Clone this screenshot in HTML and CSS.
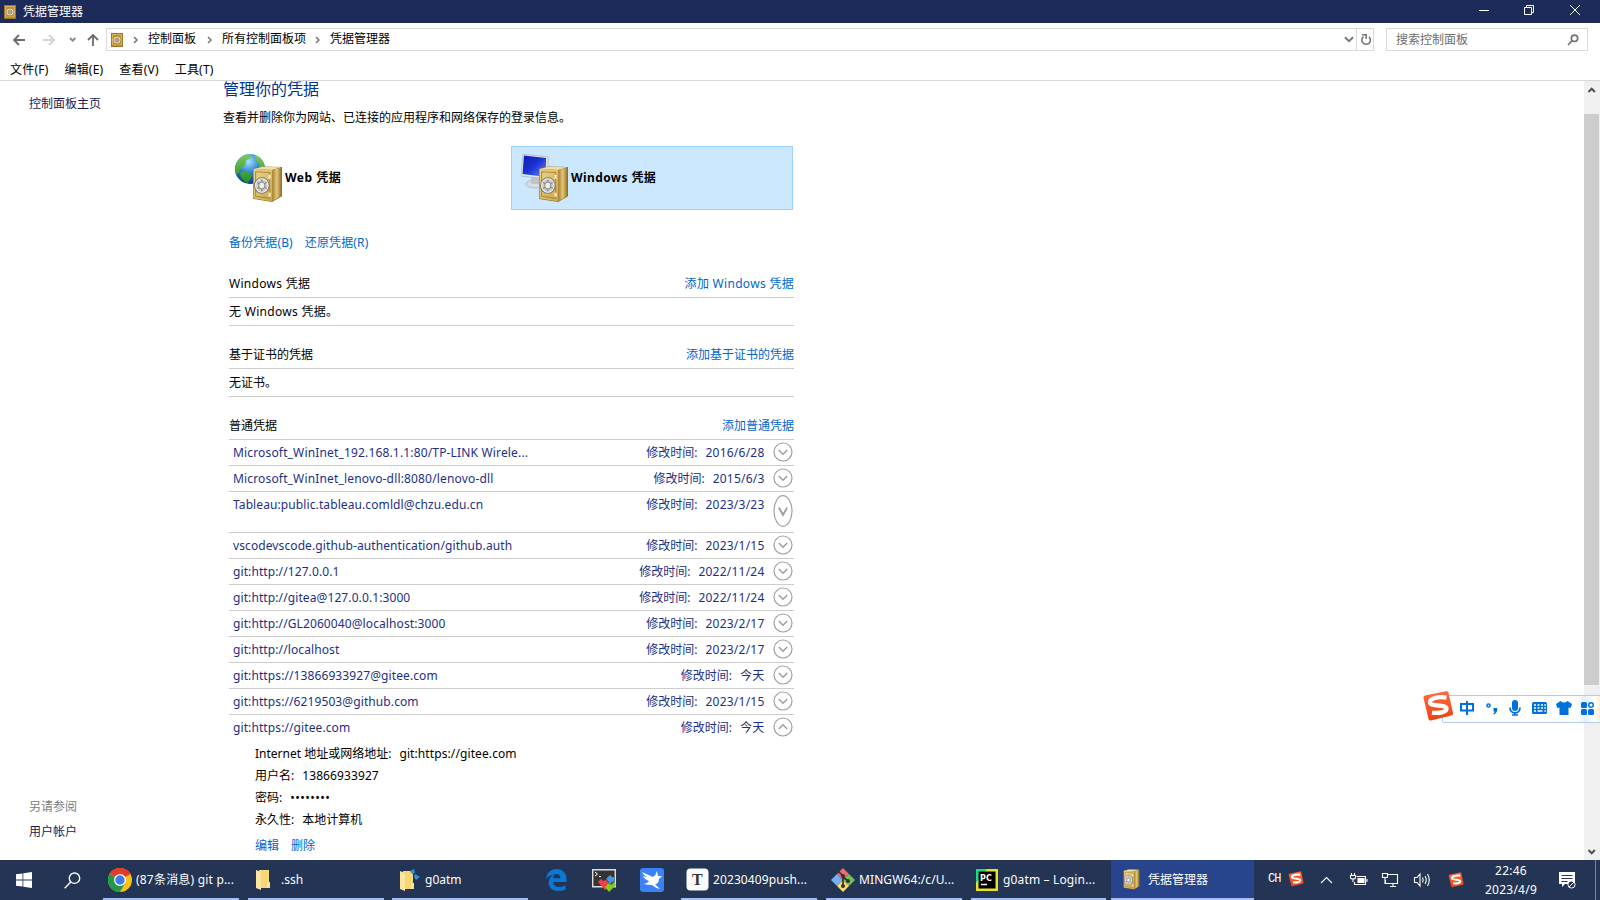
FILE: index.html
```html
<!DOCTYPE html>
<html lang="zh-CN">
<head>
<meta charset="utf-8">
<title>凭据管理器</title>
<link rel="stylesheet" href="styles.css">
</head>
<body>
<svg class="defs" width="0" height="0" aria-hidden="true">
  <defs>
    <linearGradient id="gold" x1="0" y1="0" x2="1" y2="1"><stop offset="0" stop-color="#ecd68f"/><stop offset="1" stop-color="#c9a54c"/></linearGradient>
    <linearGradient id="side" x1="0" y1="0" x2="1" y2="0"><stop offset="0" stop-color="#a8822f"/><stop offset=".5" stop-color="#e2c777"/><stop offset="1" stop-color="#94712a"/></linearGradient>
    <radialGradient id="sea" cx=".45" cy=".25" r=".8"><stop offset="0" stop-color="#a6e2fa"/><stop offset=".45" stop-color="#2f86d4"/><stop offset="1" stop-color="#0d2f74"/></radialGradient>
    <linearGradient id="land" x1="0" y1="0" x2="0" y2="1"><stop offset="0" stop-color="#7cc95a"/><stop offset="1" stop-color="#1f8f22"/></linearGradient>
    <linearGradient id="screen" x1="0" y1="0" x2="1" y2="1"><stop offset="0" stop-color="#0a1bb0"/><stop offset=".5" stop-color="#1c34d4"/><stop offset="1" stop-color="#6f8dfa"/></linearGradient>
    <linearGradient id="sg" x1="0" y1="0" x2="0" y2="1"><stop offset="0" stop-color="#ff6a3c"/><stop offset="1" stop-color="#ec4410"/></linearGradient>
    <symbol id="vault" viewBox="0 0 30 36" preserveAspectRatio="none">
      <path d="M1 3 10 .5 29 1v28.500L19.500 35 1 32z" fill="#8d6b22"/>
      <path d="M1.500 3 10 .8 28.500 1.200 19.500 4z" fill="#f2dfa4"/>
      <path d="M19.500 4 28.500 1.500v27.500l-9 5.500z" fill="url(#side)"/>
      <path d="M1.500 3l18 1v30.500L1.500 31.500z" fill="url(#gold)"/>
      <path d="M3.500 5.500 17 6.300v25.200L3.500 29.500z" fill="none" stroke="#ad8b3e"/>
      <path d="M17 8.500v4M17 26v4" stroke="#f9efc9" stroke-width="2"/>
      <ellipse cx="9.500" cy="19" rx="7" ry="7.600" fill="#c9c9c6" stroke="#77766f"/>
      <path d="M9.500 12.500v13M4 15.500l11 7M15 15.500l-11 7" stroke="#85847d" stroke-width="1"/>
      <ellipse cx="9.500" cy="19" rx="6" ry="6.600" fill="none" stroke="#f1f1ee" stroke-width="1"/>
      <ellipse cx="9.500" cy="19" rx="3" ry="3.400" fill="#ececea" stroke="#77766f" stroke-width=".8"/>
    </symbol>
    <symbol id="safe" viewBox="0 0 12 14">
      <path d="M0 0h12v14H0z" fill="#9b762b"/><path d="M1 1h10v11.500H1z" fill="#d8b357"/><path d="M2 2h8v9.500H2z" fill="#b88f3b"/>
      <circle cx="6" cy="7" r="3.300" fill="#eee6cf"/><circle cx="6" cy="7" r="2" fill="#d7cfb8" stroke="#8c8065"/><circle cx="6" cy="7" r=".7" fill="#5f5640"/>
    </symbol>
    <symbol id="down" viewBox="0 0 20 20"><circle cx="10" cy="10" r="9" fill="#fff" stroke="#a0a0a0" stroke-width="1.200" vector-effect="non-scaling-stroke"/><path d="M5.800 8 10 12.200 14.200 8" fill="none" stroke="#a0a0a0" stroke-width="1.600"/></symbol>
    <symbol id="sogou" viewBox="0 0 32 32"><path d="M3 5.500 24 1.200q2-.4 2.500 1.500L31 23q.4 2-1.600 2.500L9 30.500q-2 .4-2.500-1.600L1.500 8Q1 6 3 5.500z" fill="url(#sg)"/><path d="M24.500 7.600C17 6.200 7.500 8 8 12.500c.5 4.500 16.500 1.500 16.500 6 0 4-8 5-14.500 4" fill="none" stroke="#fff" stroke-width="4.300"/></symbol>
    <symbol id="folder" viewBox="0 0 14 20"><path d="M3 1h10v17H3z" fill="#d9ac47"/><path d="M3 0h10v12l-1 6H5z" fill="#f7d777"/><path d="M0 0 5 2v18l-5-2z" fill="#fbe6a0"/><path d="M11 12h3v6h-3z" fill="#fbe397"/></symbol>
  </defs>
</svg>

<header class="titlebar">
  <svg class="app-icon" width="12" height="14"><use href="#safe"/></svg>
  <span class="title">凭据管理器</span>
  <svg class="winctl" width="104" height="14" viewBox="0 0 104 14" fill="none" stroke="#fff"><path d="M0 7.500h10M45.500 4.500h7v7h-7zM47.500 4V2.500h7v7H53M91 2l10 10M101 2 91 12" /></svg>
</header>

<nav class="navbar">
  <svg class="arrows" width="90" height="16" viewBox="0 0 90 16" fill="none" stroke-width="1.800"><path d="M13 8H2M7 3 2 8l5 5" stroke="#6b6b6b"/><path d="M31 8h11M37 3l5 5-5 5" stroke="#d4d4d4"/><path d="m58 6 2.700 2.700L63.400 6" stroke="#888"/><path d="M81 14V3M76 8l5-5 5 5" stroke="#6b6b6b"/></svg>
  <div class="address">
    <svg class="addr-icon" width="12" height="14"><use href="#safe"/></svg>
    <svg class="crumb first" width="6" height="8"><path d="m1 1 3 3-3 3" fill="none" stroke="#777" stroke-width="1.500"/></svg>
    <span>控制面板</span>
    <svg class="crumb" width="6" height="8"><path d="m1 1 3 3-3 3" fill="none" stroke="#777" stroke-width="1.500"/></svg>
    <span>所有控制面板项</span>
    <svg class="crumb last" width="6" height="8"><path d="m1 1 3 3-3 3" fill="none" stroke="#777" stroke-width="1.500"/></svg>
    <span>凭据管理器</span>
    <svg class="drop" width="10" height="7"><path d="m1 1.200 4 4 4-4" fill="none" stroke="#777" stroke-width="2"/></svg>
    <span class="refresh"><svg width="12" height="13" viewBox="0 0 12 13" fill="none" stroke="#777" stroke-width="1.600"><path d="M9 3.800A4.300 4.300 0 1 1 3.500 3.600M2 1.800h4.200V6"/></svg></span>
  </div>
  <div class="search"><span>搜索控制面板</span><svg width="12" height="12" viewBox="0 0 12 12" fill="none" stroke="#747474" stroke-width="1.700"><circle cx="7.500" cy="4.300" r="3.200"/><path d="M5.200 6.700 1 11"/></svg></div>
</nav>

<div class="menubar"><span>文件(F)</span><span>编辑(E)</span><span>查看(V)</span><span>工具(T)</span></div>

<main class="body">
  <aside class="sidebar">
    <a class="home">控制面板主页</a>
    <div class="seealso"><span>另请参阅</span><a>用户帐户</a></div>
  </aside>
  <section class="content">
    <h1>管理你的凭据</h1>
    <p class="intro">查看并删除你为网站、已连接的应用程序和网络保存的登录信息。</p>
    <div class="tiles">
      <div class="tile">
        <svg width="48" height="50" viewBox="0 0 48 50"><circle cx="15" cy="16" r="15" fill="url(#sea)"/><path d="M1 11Q5 3 12 1.500q3 0 5 1.500l-3 3-3 1-1 5-4 3-2 5-3 1Q-1 15 1 11zM20 2q7 2.500 9.500 10l-2 5-3-3-1-4-3-3zM5 20q3-2 7-1l5 3-2 5-3 3Q6 27 5 20z" fill="url(#land)"/><svg x="17" y="13" width="31" height="37"><use href="#vault"/></svg></svg>
        <b class="t-web">Web 凭据</b>
      </div>
      <div class="tile selected">
        <svg width="48" height="50" viewBox="0 0 48 50"><ellipse cx="14" cy="31" rx="9" ry="4" fill="#d9dde3" stroke="#b4b9c2"/><path d="M10 24h8v7h-8z" fill="#bfc4cc"/><path d="M2 1 27 4v22L0 23z" fill="#e7e9ee" stroke="#abb0ba" stroke-width=".7"/><path d="M3 2.500 25 5v19L1.500 21z" fill="url(#screen)"/><svg x="17" y="13" width="31" height="37"><use href="#vault"/></svg></svg>
        <b class="t-win">Windows 凭据</b>
      </div>
    </div>
    <div class="actions"><a>备份凭据(B)</a><a>还原凭据(R)</a></div>

    <div class="group"><span class="latin">Windows 凭据</span><a class="latin">添加 Windows 凭据</a></div>
    <div class="empty latin">无 Windows 凭据。</div>
    <div class="group"><span>基于证书的凭据</span><a>添加基于证书的凭据</a></div>
    <div class="empty">无证书。</div>
    <div class="group"><span>普通凭据</span><a>添加普通凭据</a></div>
    <ul class="creds">
      <li class="wide"><span>Microsoft_WinInet_192.168.1.1:80/TP-LINK Wirele...</span><em>修改时间:</em><time>2016/6/28</time><svg><use href="#down"/></svg></li>
      <li class="wide"><span>Microsoft_WinInet_lenovo-dll:8080/lenovo-dll</span><em>修改时间:</em><time>2015/6/3</time><svg><use href="#down"/></svg></li>
      <li class="tall"><span>Tableau:public.tableau.comldl@chzu.edu.cn</span><em>修改时间:</em><time>2023/3/23</time><svg viewBox="0 0 20 20" preserveAspectRatio="none"><use href="#down" width="20" height="20"/></svg></li>
      <li><span>vscodevscode.github-authentication/github.auth</span><em>修改时间:</em><time>2023/1/15</time><svg><use href="#down"/></svg></li>
      <li><span>git:http://127.0.0.1</span><em>修改时间:</em><time>2022/11/24</time><svg><use href="#down"/></svg></li>
      <li><span>git:http://gitea@127.0.0.1:3000</span><em>修改时间:</em><time>2022/11/24</time><svg><use href="#down"/></svg></li>
      <li><span>git:http://GL2060040@localhost:3000</span><em>修改时间:</em><time>2023/2/17</time><svg><use href="#down"/></svg></li>
      <li><span>git:http://localhost</span><em>修改时间:</em><time>2023/2/17</time><svg><use href="#down"/></svg></li>
      <li><span>git:https://13866933927@gitee.com</span><em>修改时间:</em><time>今天</time><svg><use href="#down"/></svg></li>
      <li><span>git:https://6219503@github.com</span><em>修改时间:</em><time>2023/1/15</time><svg><use href="#down"/></svg></li>
      <li class="open"><span>git:https://gitee.com</span><em>修改时间:</em><time>今天</time><svg class="up"><use href="#down"/></svg></li>
    </ul>
    <dl class="details">
      <div><dt>Internet 地址或网络地址:</dt><dd>git:https://gitee.com</dd></div>
      <div><dt>用户名:</dt><dd>13866933927</dd></div>
      <div><dt>密码:</dt><dd class="dots">••••••••</dd></div>
      <div><dt>永久性:</dt><dd class="cjk">本地计算机</dd></div>
    </dl>
    <div class="edit"><a>编辑</a><a>删除</a></div>
  </section>
  <div class="scrollbar">
    <svg width="16" height="33" viewBox="0 0 16 33"><path d="m4.500 11 3.200-3.300 3.200 3.300" fill="none" stroke="#505050" stroke-width="2"/></svg>
    <div class="thumb"></div>
    <svg width="16" height="17" viewBox="0 0 16 17"><path d="m4.500 7 3.200 3.300L10.900 7" fill="none" stroke="#505050" stroke-width="2"/></svg>
  </div>
</main>

<div class="ime">
  <svg class="ime-logo" width="32" height="32"><use href="#sogou"/></svg>
  <svg width="150" height="24" viewBox="0 0 150 24" fill="#0070dc">
    <g fill="none" stroke="#0070dc" stroke-width="2"><path d="M9 8h12v6.500H9zM15 5v14"/><circle cx="36.500" cy="9.500" r="1.600" stroke-width="1.500"/></g>
    <path d="M41.500 12h3.700q.8 4-3.200 6.500l-.8-.7q1.500-1.200 1.500-2.300h-1.200z"/>
    <rect x="60" y="4" width="6" height="11" rx="3"/><path d="M58 11.500q0 5.300 5 5.300t5-5.300M63 16.500V19M60 19h6" fill="none" stroke="#0070dc" stroke-width="1.700"/>
    <rect x="80" y="6" width="15" height="12" rx="1.500"/><path d="M82 9h2m1.500 0h2m1.500 0h2m1.300 0H94M82 12h2m1.500 0h2m1.500 0h2m1.300 0H94M82 15h2m1.500 0h5m2 0H94" stroke="#fff" stroke-width="1.700"/>
    <path d="m108.500 5-4.500 3 1.300 4 2.200-.5V19h9v-7.500l2.200.5 1.300-4-4.500-3q-3.500 3-7 0z"/>
    <rect x="129" y="6" width="6" height="6" rx="1.500"/><circle cx="139" cy="9" r="2.300" fill="none" stroke="#0070dc" stroke-width="1.500"/><rect x="129" y="13" width="6" height="6" rx="1.500"/><rect x="136" y="13" width="6" height="6" rx="1.500"/>
  </svg>
</div>

<footer class="taskbar">
  <svg class="start" width="16" height="16" viewBox="0 0 16 16" fill="#fff"><path d="m0 2.300 6.500-.9v6.200H0zM7.300 1.200 16 0v7.600H7.300zM0 8.400h6.500v6.200L0 13.700zM7.300 8.400H16V16l-8.700-1.200z"/></svg>
  <svg class="find" width="17" height="17" viewBox="0 0 17 17" fill="none" stroke="#fff" stroke-width="1.400"><circle cx="10.500" cy="6.200" r="5.200"/><path d="M6.700 10 .7 16.300"/></svg>
  <div class="task chrome"><svg width="24" height="24" viewBox="0 0 24 24"><circle cx="12" cy="12" r="12" fill="#fbc116"/><path d="M12 12 1.600 6A12 12 0 0 1 22.400 6z" fill="#e33b2e"/><path d="M1.600 6A12 12 0 0 0 12 24l5.200-9L12 12z" fill="#229a48"/><circle cx="12" cy="12" r="6" fill="#fff"/><circle cx="12" cy="12" r="4.700" fill="#3b7ded"/></svg><span>(87条消息) git p...</span></div>
  <div class="task ssh"><svg width="14" height="20"><use href="#folder"/></svg><span>.ssh</span></div>
  <div class="task goat"><svg width="20" height="22" viewBox="0 0 20 22"><svg y="2" width="14" height="20"><use href="#folder"/></svg><path d="m10 2 4-2 1 4-3 1zM15 5l5 3-4 3-2-3zM11 3l6 5" fill="#2c93d8"/></svg><span>g0atm</span></div>
  <svg class="edge" width="21" height="22" viewBox="0 0 21 22"><path d="M0 10C1 3 5.500 0 10.500 0 17 0 20.500 4.500 20.500 10v3H7c.2 3.500 3 5 6 5 2.500 0 4.500-.6 6.500-1.800v4.300Q16.500 22 12 22C6 22 2.700 18.300 2.700 13.500c0-4 2.300-6.600 5-7.800Q3.500 6 0 10zm7-.8h7.300C14.300 6.500 13 5 10.800 5S7.300 6.600 7 9.200z" fill="#0a78d7"/></svg>
  <svg class="moba" width="24" height="23" viewBox="0 0 24 23"><path d="M.7.700h22.600v17H.7z" fill="#343434" stroke="#ddd" stroke-width="1.400"/><path d="m3 3 2.500 2L3 7M7 7.500h2" fill="none" stroke="#fff"/><path d="m6 13 3-3 2 2 3-1 3 3-2 3 1 2-3 2z" fill="#f0404a"/><path d="m14 10 4-4 2 2 2 0 0 4-4 3-2-3z" fill="#3a9bea"/><path d="m13 18 4-4 2 2 3-3 2 3-7 7z" fill="#82cc20"/></svg>
  <svg class="bird" width="24" height="24" viewBox="0 0 24 24"><rect width="24" height="24" rx="3" fill="#3b82f8"/><path d="m2 4 11 5q3-2 4-6l1 5 4 0-3 3q0 5-4 5l5 5q-5-1-8-4-4 0-8-1 4-1 5-3-5-2-6-5 2 1 4 1-4-2-5-5z" fill="#fff"/></svg>
  <div class="task typora"><svg width="23" height="23" viewBox="0 0 23 23"><rect x=".5" y=".5" width="22" height="22" rx="4" fill="#fafafa"/><text x="6" y="17" class="ttext">T</text></svg><span>20230409push...</span></div>
  <div class="task ming"><svg width="24" height="24" viewBox="0 0 24 24"><path d="m12 0 6 6-6 6-6-6z" fill="#f2686b"/><path d="m18 6 6 6-6 6-6-6z" fill="#77bd58"/><path d="m6 6 6 6-6 6-6-6z" fill="#75aef5"/><path d="m12 12 6 6-6 6-6-6z" fill="#fbdc68"/><path d="m7 3 5 5v10M12 9l5 4" fill="none" stroke="#343434" stroke-width="1.700"/><g fill="#343434"><circle cx="12" cy="8" r="2"/><circle cx="17" cy="13" r="2"/><circle cx="12" cy="18" r="2"/></g></svg><span>MINGW64:/c/U...</span></div>
  <div class="task pc"><svg width="22" height="22" viewBox="0 0 22 22"><path d="M0 0h22v22H0z" fill="#e6e22b"/><path d="M0 0h11L0 14z" fill="#21d789"/><path d="M2.500 2.500h17v17h-17z"/><text x="4" y="11.500" class="pctext">PC</text><path d="M5 15.500h6" stroke="#fff" stroke-width="1.500"/></svg><span>g0atm – Login...</span></div>
  <div class="task active"><svg width="17" height="21"><use href="#vault"/></svg><span>凭据管理器</span></div>
  <div class="tray">
    <span class="ch">CH</span>
    <svg class="s1" width="16" height="16"><use href="#sogou"/></svg>
    <svg class="trayicons" width="112" height="16" viewBox="0 0 112 16" fill="none" stroke="#fff" stroke-width="1.100"><path d="M1 11l5.500-5.500L12 11"/><path d="M36.500 4.500H45.500v8H34.500V10M47 7v3"/><path d="M38 6.500h6v4h-6z" fill="#fff"/><path d="M31.500 1v2M34.500 1v2M30.500 3.500h5v2q0 1.500-2.500 1.500t-2.500-1.500zM33 7v3"/><path d="M68 2.500h9.500v9H65.500V8M70 14.500h6M73 12v2.500M62.500 1.500h5v4h-5zM65 6v6"/><path d="M94.500 5.500H97l3-3.500v12l-3-3.500h-2.500zM102.500 5.500q1.300 2.500 0 5M105 4q2.500 4 0 8M107.500 2q3.500 6 0 12"/></svg>
    <svg class="s2" width="16" height="16"><use href="#sogou"/></svg>
    <div class="clock"><span>22:46</span><span>2023/4/9</span></div>
    <svg class="notice" width="17" height="17" viewBox="0 0 17 17"><path d="M0 0h16v12H6l-3 3v-3H0z" fill="#fff"/><path d="M2.500 3.500h11M2.500 6.500h11M2.500 9.500h6" stroke="#26365a" stroke-width="1.200"/><circle cx="12.500" cy="12.500" r="3.600" fill="#26365a" stroke="#fff"/><path d="m10 15 5-5" stroke="#fff"/></svg>
    <i class="peek"></i>
  </div>
</footer>
</body>
</html>
```
FILE: styles.css
```css
* { box-sizing: border-box; }
html, body { margin: 0; width: 1600px; height: 900px; overflow: hidden; }
body { display: flex; flex-direction: column; background: #fff; color: #000; font: 12px/16px "Noto Sans", "Noto Sans CJK SC", sans-serif; white-space: nowrap; }
.defs { position: absolute; }
svg { display: block; flex: none; }
a { color: #0066cc; }

.titlebar { display: flex; align-items: center; height: 23px; flex: none; padding-left: 4px; background: #1c2b59; color: #fff; }
.title { margin-left: 7px; }
.winctl { margin-left: auto; margin-right: 17px; margin-top: -3px; }

.navbar { display: flex; height: 33px; flex: none; padding-top: 5px; }
.arrows { margin: 4px 4px 0 12px; }
.address { display: flex; align-items: center; width: 1268px; height: 23px; border: 1px solid #d9d9d9; padding-left: 4px; }
.address span { margin-top: -1px; }
.crumb { margin: 1px 9px 0 11px; }
.crumb.first { margin: 1px 9px 0 10px; }
.crumb.last { margin: 1px 9px 0 9px; }
.drop { margin: 0 2px 0 auto; }
.refresh { width: 17px; height: 21px; border-left: 1px solid #d9d9d9; padding: 4px 0 0 3px; }
.search { display: flex; align-items: center; justify-content: space-between; width: 202px; height: 23px; margin-left: 12px; border: 1px solid #d9d9d9; padding: 0 8px 0 9px; color: #6d6d6d; }

.menubar { display: flex; gap: 16px; height: 25px; flex: none; padding: 6px 0 0 10px; border-bottom: 1px solid #d7d7d7; letter-spacing: .2px; }

.body { display: flex; height: 779px; flex: none; }
.sidebar { display: flex; flex-direction: column; justify-content: space-between; width: 223px; padding: 15px 0 20px 29px; }
.sidebar a { color: #151c55; }
.seealso { display: flex; flex-direction: column; gap: 9px; color: #7c7c7c; }
.content { width: 571px; }
h1 { margin: -3px 0 0; height: 22px; font-size: 16px; line-height: 22px; font-weight: 400; color: #003399; }
.intro { margin: 10px 0 0; height: 16px; }
.tiles { display: flex; gap: 4px; margin: 20px 0 0 2px; }
.tile { display: flex; flex: none; align-items: center; width: 282px; height: 64px; border: 1px solid transparent; padding-left: 9px; gap: 2px; }
.tile.selected { background: #cce8ff; border-color: #99d1ff; }
.t-web { letter-spacing: .5px; }
.t-win { letter-spacing: .4px; }
.actions { display: flex; gap: 12px; margin: 25px 0 0 6px; height: 16px; letter-spacing: .12px; }
.group { display: flex; justify-content: space-between; align-items: flex-end; height: 43px; margin-left: 6px; padding-bottom: 5px; border-bottom: 1px solid #ccc; }
.latin { letter-spacing: .3px; }
.actions + .group { height: 47px; }
.empty { height: 28px; margin-left: 6px; padding-top: 6px; border-bottom: 1px solid #ccc; }
.creds { list-style: none; margin: 0 0 0 6px; padding: 0; color: #1c2f86; }
.creds li { display: flex; height: 26px; padding: 5px 1.5px 0 4px; border-bottom: 1px solid #ccc; letter-spacing: .1px; }
.creds li.wide { letter-spacing: .16px; }
.creds li.tall { height: 41px; }
.creds li.open { border-bottom: 0; }
.creds em { margin-left: auto; font-style: normal; letter-spacing: 0; }
.creds time { margin: 0 8px; letter-spacing: .22px; }
.creds svg { width: 20px; height: 20px; margin-top: -2.600px; }
.creds .tall svg { height: 34px; }
.creds .up { transform: rotate(180deg); }
.details { display: flex; flex-direction: column; gap: 6px; margin: 5px 0 0 32px; }
.details div { display: flex; gap: 8px; }
.details dd { margin: 0; letter-spacing: .1px; }
.details .dots { letter-spacing: .5px; }
.details .cjk { letter-spacing: 0; }
.edit { display: flex; gap: 12px; margin: 10px 0 0 32px; }
.scrollbar { display: flex; flex-direction: column; width: 16px; margin-left: auto; background: #f0f0f0; }
.thumb { height: 571px; margin-right: 1px; margin-bottom: auto; background: #cdcdcd; }

.ime { position: absolute; left: 1421px; top: 690px; width: 179px; height: 36px; display: flex; padding: 6px 0 0 31px; }
.ime::before { content: ""; position: absolute; left: 21px; top: 5px; width: 158px; height: 26px; background: linear-gradient(90deg, #fff 133px, #e4f2fd 142px, #fff 152px, #fdf3cf 157px); border: 1px solid #b4cbe6; border-radius: 2px; }
.ime svg { position: relative; }
.ime .ime-logo { position: absolute; left: 1px; top: 0; }

.taskbar { display: flex; align-items: center; height: 40px; flex: none; background: #243454; color: #fff; }
.start { margin-left: 16px; }
.find { margin-left: 32px; margin-right: 22px; }
.task { display: flex; flex: none; align-items: center; height: 40px; width: 136px; margin-right: 9px; padding-left: 5px; gap: 4px; border-bottom: 2px solid #a9bcf8; padding-top: 1px; }
.chrome { letter-spacing: .2px; }
.ssh, .goat { padding-left: 8px; gap: 11px; }
.ssh { margin-right: 8px; }
.goat { gap: 5px; }
.edge { margin-left: 9px; }
.moba { margin-left: 25px; }
.bird { margin: 0 17px 0 24px; }
.typora, .ming { letter-spacing: .1px; }
.ttext { font: 700 16px "Liberation Serif", serif; fill: #333; }
.pctext { font: 700 8px "DejaVu Sans", sans-serif; fill: #fff; }
.task.pc { width: 135px; margin-right: 5px; gap: 5px; letter-spacing: .15px; }
.task.active { width: 143px; margin-right: 0; padding-left: 12px; gap: 8px; background: #27448d; }
.tray { display: flex; align-items: center; flex: 1; }
.ch { width: 12px; margin: -3px 0 0 14px; font: 12px "Liberation Mono", monospace; letter-spacing: -1px; }
.s1 { margin: -3px 0 0 8px; }
.trayicons { margin-left: 16px; }
.s2 { margin-left: 16px; }
.clock { display: flex; flex-direction: column; align-items: center; width: 60px; margin-left: 17px; line-height: 19px; letter-spacing: .25px; }
.notice { margin-left: 18px; }
.peek { width: 1px; height: 40px; margin: 0 4px 0 auto; background: #7b859b; }
```
